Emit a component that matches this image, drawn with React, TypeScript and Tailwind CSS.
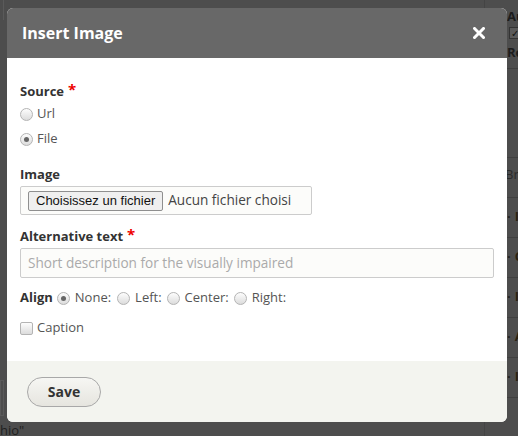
import React from "react";

const Radio = ({ checked = false }: { checked?: boolean }) => (
  <span className="inline-flex w-[13px] h-[13px] shrink-0 items-center justify-center rounded-full border border-[#b4b4b4] bg-gradient-to-b from-[#fdfdfd] to-[#dcdcdc]">
    {checked && <span className="block w-[5px] h-[5px] rounded-full bg-[#666]" />}
  </span>
);

const Star = () => <span className="text-[#e00] ml-[4px] text-[15px] leading-none relative top-[-3px]">*</span>;

export default function App() {
  const rows = [68, 157, 197, 237, 277, 317, 357, 397];
  return (
    <div
      className="relative w-[518px] h-[436px] overflow-hidden bg-[#4d4d4d]"
      style={{ fontFamily: '"Open Sans", "Liberation Sans", sans-serif' }}
    >
      {/* background page (dimmed) */}
      <div className="absolute left-[484px] top-0 w-[34px] h-full border-l border-[#444]">
        <div className="pl-[22px] pt-[10px] text-[13px] font-bold text-[#1c1c1c] leading-none">Au</div>
        <div className="ml-[24px] mt-[4px] w-[12px] h-[12px] border border-[#333] bg-[#5a5a5a] text-[10px] leading-[10px] text-[#111] text-center">✓</div>
        <div className="pl-[22px] mt-[7px] text-[13px] font-bold text-[#1c1c1c] leading-none">Re</div>
      </div>
      {rows.map((y) => (
        <div key={y} className="absolute left-[484px] right-0 h-px bg-[#3f3f3f]" style={{ top: y }} />
      ))}
      <div className="absolute left-[505px] top-[168px] text-[13px] text-[#2a2a2a] leading-none">Br</div>
      {[217, 257, 297, 337, 377].map((y, i) => (
        <div key={y} className="absolute left-[507px] text-[13px] font-bold text-[#2a2212] leading-none" style={{ top: y - 7 }}>
          <span className="text-[#222] mr-[4px]">·</span>
          {["I", "C", "I", "A", "I"][i]}
        </div>
      ))}
      <div className="absolute left-0 top-0 w-[4px] h-[20px] border-r border-[#5a5a5a]" />
      <div className="absolute left-0 top-[380px] w-[4px] h-[36px] border border-[#5a5a5a]" />
      <div className="absolute left-0 top-[424px] text-[13px] text-[#1f1f1f] leading-none">hio"</div>

      {/* dialog */}
      <div className="absolute left-[7px] top-[8px] w-[500px] h-[414px] rounded-[6px] overflow-hidden flex flex-col bg-white">
        <div className="h-[50px] shrink-0 bg-[#686868] flex items-center justify-between pl-[15px] pr-[22px]">
          <span className="text-white font-bold text-[16px] leading-none">Insert Image</span>
          <svg width="12" height="12" viewBox="0 0 12 12">
            <path d="M1.5 1.5 L10.5 10.5 M10.5 1.5 L1.5 10.5" stroke="#fff" strokeWidth="3" strokeLinecap="square" />
          </svg>
        </div>
        <div className="flex-1 pl-[13px] pr-[13px] pt-[25px] text-[13px] text-[#333]">
          <div className="h-[18px] flex items-center font-bold">
            Source
            <Star />
          </div>
          <div className="h-[18px] mt-[4px] flex items-center gap-[4px] text-[#555]">
            <Radio />
            <span>Url</span>
          </div>
          <div className="h-[18px] mt-[7px] flex items-center gap-[4px] text-[#555]">
            <Radio checked />
            <span>File</span>
          </div>
          <div className="h-[18px] mt-[18px] flex items-center font-bold">Image</div>
          <div className="mt-[2px] w-[292px] h-[29px] border border-[#ccc] bg-[#fcfcfa] rounded-[2px] flex items-center pl-[7px] gap-[4px]">
            <span
              className="h-[20px] px-[7px] flex items-center border border-[#8f8f8f] rounded-[2px] bg-[#efefef] text-[13px] text-[#111]"
              style={{ fontFamily: '"Liberation Sans", Arial, sans-serif' }}
            >
              Choisissez un fichier
            </span>
            <span className="text-[#444] text-[13.6px] ml-[1px]">Aucun fichier choisi</span>
          </div>
          <div className="h-[18px] mt-[13px] flex items-center font-bold">
            Alternative text
            <Star />
          </div>
          <div className="mt-[2px] w-[474px] h-[30px] border border-[#ccc] bg-[#fcfcfa] rounded-[2px] flex items-center pl-[7px] text-[#aaa] text-[13.6px]">
            Short description for the visually impaired
          </div>
          <div className="h-[18px] mt-[11px] flex items-center text-[#555]">
            <span className="font-bold text-[#333] mr-[4px]">Align</span>
            <Radio checked />
            <span className="ml-[5px] mr-[6px]">None:</span>
            <Radio />
            <span className="ml-[5px] mr-[5px]">Left:</span>
            <Radio />
            <span className="ml-[5px] mr-[5px]">Center:</span>
            <Radio />
            <span className="ml-[5px]">Right:</span>
          </div>
          <div className="h-[18px] mt-[12px] flex items-center gap-[4px] text-[#555]">
            <span className="w-[13px] h-[13px] border border-[#b4b4b4] rounded-[2px] bg-gradient-to-b from-[#fdfdfd] to-[#dcdcdc]" />
            <span>Caption</span>
          </div>
        </div>
        <div className="h-[61px] shrink-0 bg-[#f3f4ef] flex items-center pl-[20px]">
          <button className="w-[74px] h-[30px] rounded-full border border-[#a8a8a8] bg-gradient-to-b from-[#f6f6f3] to-[#e6e5df] text-[14px] font-bold text-[#333] leading-none">
            Save
          </button>
        </div>
      </div>
    </div>
  );
}
